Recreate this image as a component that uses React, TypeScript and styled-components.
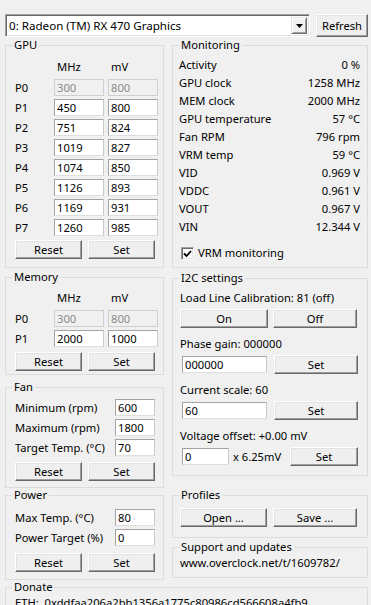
import React from 'react';
import styled, { createGlobalStyle } from 'styled-components';

const Global = createGlobalStyle`
  html, body { margin: 0; padding: 0; background: #f0f0f0; }
  body { font-family: "Noto Sans", "Open Sans", sans-serif; font-size: 11.2px; color: #000; }
  * { box-sizing: border-box; }
`;

const Window = styled.div`
  width: 371px;
  height: 605px;
  overflow: hidden;
  padding: 14px 0 0 5px;
  background: #f0f0f0;
  line-height: 16px;
`;

const TopBar = styled.div`
  display: flex;
  gap: 6px;
  height: 23px;
`;

const Combo = styled.div`
  width: 305px;
  height: 23px;
  display: flex;
  align-items: center;
  background: #fff;
  border: 1px solid;
  border-color: #a0a0a0 #fff #fff #a0a0a0;
  box-shadow: inset 1px 1px 0 #696969, inset -1px -1px 0 #e3e3e3;
  padding: 0 2px 0 2px;
`;

const ComboText = styled.span`
  flex: 1;
  padding-left: 1px;
  font-size: 11.6px;
  white-space: nowrap;
`;

const ComboArrow = styled.div`
  width: 16px;
  height: 17px;
  display: flex;
  align-items: center;
  justify-content: center;
  background: #f0f0f0;
  border: 1px solid;
  border-color: #e3e3e3 #696969 #696969 #e3e3e3;
  box-shadow: inset 1px 1px 0 #fff, inset -1px -1px 0 #a0a0a0;
`;

const Btn = styled.button<{ $w: number; $h?: number }>`
  width: ${(p) => p.$w}px;
  height: ${(p) => p.$h ?? 19}px;
  flex: none;
  font: inherit;
  line-height: 16px;
  color: #000;
  padding: 0;
  background: #efefef;
  border: 1px solid;
  border-color: #fff #696969 #696969 #fff;
  box-shadow: inset -1px -1px 0 #a0a0a0, inset 1px 1px 0 #e3e3e3;
  display: flex;
  align-items: center;
  justify-content: center;
`;

const Columns = styled.div`
  display: flex;
  gap: 8px;
  align-items: flex-start;
`;

const Column = styled.div<{ $w: number }>`
  width: ${(p) => p.$w}px;
  display: flex;
  flex-direction: column;
`;

const Group = styled.fieldset<{ $h: number; $mt?: number; $w?: number }>`
  margin: ${(p) => p.$mt ?? 0}px 0 0 0;
  padding: 0;
  min-width: 0;
  width: ${(p) => (p.$w ? `${p.$w}px` : 'auto')};
  height: ${(p) => p.$h}px;
  border: 1px solid #dcdcdc;
`;

const Legend = styled.legend`
  margin-left: 6px;
  padding: 0 2px;
  line-height: 16px;
  font-size: inherit;
`;

const Body = styled.div<{ $pt: number; $pl: number; $pr?: number }>`
  padding: ${(p) => p.$pt}px ${(p) => p.$pr ?? 0}px 0 ${(p) => p.$pl}px;
  display: flex;
  flex-direction: column;
`;

const HeadRow = styled.div`
  display: grid;
  grid-template-columns: 35px 50px 50px;
  column-gap: 4px;
  height: 16px;
  margin-bottom: 4px;
`;

const ColHead = styled.span`
  padding-left: 3px;
`;

const PGrid = styled.div`
  display: grid;
  grid-template-columns: 35px 50px 50px;
  grid-auto-rows: 17px;
  column-gap: 4px;
  row-gap: 3px;
  align-items: center;
`;

const Field = styled.input<{ $w?: number; $ml?: number }>`
  width: ${(p) => (p.$w ? `${p.$w}px` : '100%')};
  margin-left: ${(p) => p.$ml ?? 0}px;
  height: 17px;
  flex: none;
  font: inherit;
  line-height: 15px;
  padding: 0 2px;
  color: #000;
  background: #fff;
  border: 1px solid;
  border-color: #a3a3a3 #c9c9c9 #dedede #a3a3a3;
  outline: none;
  &:disabled {
    background: #f0f0f0;
    color: #8a8a8a;
    border-color: #cfcfcf;
  }
`;

const ButtonRow = styled.div<{ $mt: number; $gap?: number }>`
  display: flex;
  gap: ${(p) => p.$gap ?? 6}px;
  margin-top: ${(p) => p.$mt}px;
`;

const FormRows = styled.div`
  display: flex;
  flex-direction: column;
  gap: 3px;
`;

const FormRow = styled.div`
  display: flex;
  align-items: center;
  height: 17px;
`;

const FormLabel = styled.span`
  width: 100px;
  white-space: nowrap;
`;

const MonRow = styled.div`
  display: flex;
  justify-content: space-between;
  height: 18px;
  line-height: 18px;
`;

const CheckRow = styled.label`
  display: flex;
  align-items: center;
  gap: 4px;
  height: 16px;
  margin-top: 9px;
  padding-left: 2px;
`;

const CheckBox = styled.span`
  width: 13px;
  height: 13px;
  background: #fff;
  border: 1px solid;
  border-color: #a0a0a0 #fff #fff #a0a0a0;
  box-shadow: inset 1px 1px 0 #696969, inset -1px -1px 0 #e3e3e3;
  display: flex;
  align-items: center;
  justify-content: center;
`;

const Caption = styled.div<{ $mt?: number }>`
  height: 16px;
  margin-top: ${(p) => p.$mt ?? 0}px;
  white-space: nowrap;
`;

const CtrlRow = styled.div<{ $mt?: number }>`
  display: flex;
  align-items: center;
  height: 19px;
  margin-top: ${(p) => p.$mt ?? 3}px;
`;

const Unit = styled.span`
  margin-left: 4px;
  flex: 1;
  white-space: nowrap;
`;

const Donate = styled.fieldset`
  margin: -1px 0 0 0;
  padding: 0;
  width: 363px;
  height: 50px;
  border: 1px solid #dcdcdc;
`;

const Mono = styled.div`
  padding-left: 9px;
  white-space: pre;
  height: 16px;
`;

const gpuRows: [string, string, string][] = [
  ['P0', '300', '800'],
  ['P1', '450', '800'],
  ['P2', '751', '824'],
  ['P3', '1019', '827'],
  ['P4', '1074', '850'],
  ['P5', '1126', '893'],
  ['P6', '1169', '931'],
  ['P7', '1260', '985'],
];

const memRows: [string, string, string][] = [
  ['P0', '300', '800'],
  ['P1', '2000', '1000'],
];

const monRows: [string, string][] = [
  ['Activity', '0 %'],
  ['GPU clock', '1258 MHz'],
  ['MEM clock', '2000 MHz'],
  ['GPU temperature', '57 °C'],
  ['Fan RPM', '796 rpm'],
  ['VRM temp', '59 °C'],
  ['VID', '0.969 V'],
  ['VDDC', '0.961 V'],
  ['VOUT', '0.967 V'],
  ['VIN', '12.344 V'],
];

function PTable({ rows }: { rows: [string, string, string][] }) {
  return (
    <>
      <HeadRow>
        <span />
        <ColHead>MHz</ColHead>
        <ColHead>mV</ColHead>
      </HeadRow>
      <PGrid>
        {rows.map(([p, mhz, mv], i) => (
          <React.Fragment key={p}>
            <span>{p}</span>
            <Field defaultValue={mhz} disabled={i === 0} />
            <Field defaultValue={mv} disabled={i === 0} />
          </React.Fragment>
        ))}
      </PGrid>
    </>
  );
}

function ResetSet({ mt }: { mt: number }) {
  return (
    <ButtonRow $mt={mt}>
      <Btn $w={67}>Reset</Btn>
      <Btn $w={67}>Set</Btn>
    </ButtonRow>
  );
}

export default function App() {
  return (
    <Window>
      <Global />
      <TopBar>
        <Combo>
          <ComboText>0: Radeon (TM) RX 470 Graphics</ComboText>
          <ComboArrow>
            <svg width="7" height="4" viewBox="0 0 7 4">
              <path d="M0 0 H7 L3.5 4 Z" fill="#000" />
            </svg>
          </ComboArrow>
        </Combo>
        <Btn $w={52} $h={23}>Refresh</Btn>
      </TopBar>
      <Columns>
        <Column $w={159}>
          <Group $h={231}>
            <Legend>GPU</Legend>
            <Body $pt={6} $pl={9}>
              <PTable rows={gpuRows} />
              <ResetSet mt={4} />
            </Body>
          </Group>
          <Group $h={106} $mt={1}>
            <Legend>Memory</Legend>
            <Body $pt={5} $pl={9}>
              <PTable rows={memRows} />
              <ResetSet mt={5} />
            </Body>
          </Group>
          <Group $h={109} $mt={4}>
            <Legend>Fan</Legend>
            <Body $pt={4} $pl={9}>
              <FormRows>
                <FormRow>
                  <FormLabel>Minimum (rpm)</FormLabel>
                  <Field $w={40} defaultValue="600" />
                </FormRow>
                <FormRow>
                  <FormLabel>Maximum (rpm)</FormLabel>
                  <Field $w={40} defaultValue="1800" />
                </FormRow>
                <FormRow>
                  <FormLabel>Target Temp. (°C)</FormLabel>
                  <Field $w={40} defaultValue="70" />
                </FormRow>
              </FormRows>
              <ResetSet mt={6} />
            </Body>
          </Group>
          <Group $h={93} $mt={-1}>
            <Legend>Power</Legend>
            <Body $pt={6} $pl={9}>
              <FormRows>
                <FormRow>
                  <FormLabel>Max Temp. (°C)</FormLabel>
                  <Field $w={40} defaultValue="80" />
                </FormRow>
                <FormRow>
                  <FormLabel>Power Target (%)</FormLabel>
                  <Field $w={40} defaultValue="0" />
                </FormRow>
              </FormRows>
              <ResetSet mt={7} />
            </Body>
          </Group>
        </Column>
        <Column $w={196}>
          <Group $h={231}>
            <Legend>Monitoring</Legend>
            <Body $pt={3} $pl={6} $pr={7}>
              {monRows.map(([k, v]) => (
                <MonRow key={k}>
                  <span>{k}</span>
                  <span>{v}</span>
                </MonRow>
              ))}
              <CheckRow>
                <CheckBox>
                  <svg width="9" height="9" viewBox="0 0 9 9">
                    <path d="M1 4.5 L3.5 7 L8 2" stroke="#000" strokeWidth="1.8" fill="none" />
                  </svg>
                </CheckBox>
                <span>VRM monitoring</span>
              </CheckRow>
            </Body>
          </Group>
          <Group $h={206} $mt={2}>
            <Legend>I2C settings</Legend>
            <Body $pt={4} $pl={7} $pr={9}>
              <Caption>Load Line Calibration: 81 (off)</Caption>
              <CtrlRow>
                <Btn $w={88}>On</Btn>
                <Btn $w={84} style={{ marginLeft: 5 }}>Off</Btn>
              </CtrlRow>
              <Caption $mt={8}>Phase gain: 000000</Caption>
              <CtrlRow>
                <Field $w={85} $ml={2} defaultValue="000000" />
                <Unit />
                <Btn $w={84}>Set</Btn>
              </CtrlRow>
              <Caption $mt={8}>Current scale: 60</Caption>
              <CtrlRow>
                <Field $w={85} $ml={2} defaultValue="60" />
                <Unit />
                <Btn $w={84}>Set</Btn>
              </CtrlRow>
              <Caption $mt={8}>Voltage offset: +0.00 mV</Caption>
              <CtrlRow>
                <Field $w={47} $ml={2} defaultValue="0" />
                <Unit>x 6.25mV</Unit>
                <Btn $w={68}>Set</Btn>
              </CtrlRow>
            </Body>
          </Group>
          <Group $h={51} $mt={11}>
            <Legend>Profiles</Legend>
            <Body $pt={5} $pl={7}>
              <ButtonRow $mt={0}>
                <Btn $w={87}>Open ...</Btn>
                <Btn $w={84}>Save ...</Btn>
              </ButtonRow>
            </Body>
          </Group>
          <Group $h={39} $mt={1}>
            <Legend>Support and updates</Legend>
            <Body $pt={0} $pl={7}>
              <Caption>www.overclock.net/t/1609782/</Caption>
            </Body>
          </Group>
        </Column>
      </Columns>
      <Donate>
        <Legend>Donate</Legend>
        <Mono>{'ETH:  0xddfaa206a2bb1356a1775c80986cd566608a4fb9'}</Mono>
      </Donate>
    </Window>
  );
}
